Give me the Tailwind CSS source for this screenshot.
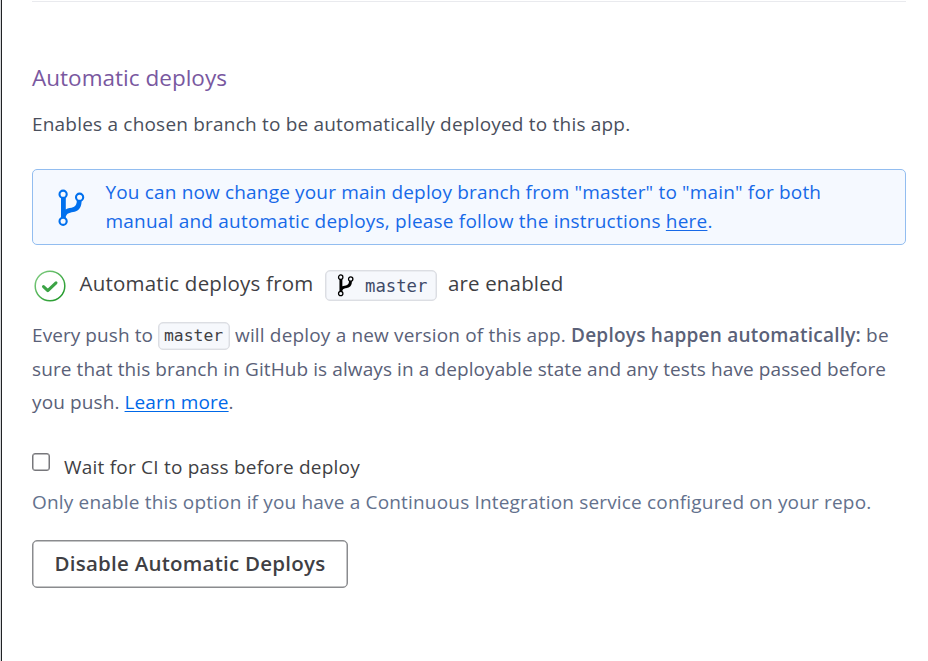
<!DOCTYPE html>
<html lang="en">
<head>
<meta charset="utf-8">
<title>Automatic deploys</title>
<script src="https://cdn.jsdelivr.net/npm/@tailwindcss/browser@4"></script>
</head>
<body class="bg-white font-['Open_Sans',sans-serif] text-[19px]">
<svg class="hidden">
  <symbol id="branch" viewBox="0 0 28 38">
    <path d="M4 9H8.8V20.4C11 18.8 14 19.2 16.6 18C19 16.8 19.8 14.6 19.8 11.5H24.6C24.6 16.5 23.4 20.4 19 22.3C15.5 23.8 10.5 22.8 8.8 27.5V30H4Z" fill="currentColor"/>
    <g fill="var(--hole)" stroke="currentColor" stroke-width="2.1">
      <circle cx="6.1" cy="5.2" r="3.6"/><circle cx="22.6" cy="8.2" r="3.6"/><circle cx="6.1" cy="32.3" r="3.6"/>
    </g>
  </symbol>
</svg>
<div class="flex h-[661px] overflow-hidden">
  <div class="w-[2px] shrink-0 border-r border-[#202225] bg-[#d5d7da]"></div>
  <main class="ml-[30px] w-[874px] shrink-0 whitespace-nowrap pt-px">
    <div class="h-px bg-[#e9eaee]"></div>
    <h2 class="mt-[60px] h-8 text-[22.5px] leading-8 tracking-[0.02px] text-[#79589f]">Automatic deploys</h2>
    <p class="mt-[16px] h-7 leading-7 tracking-[0.2px] text-[#4a4f5c]">Enables a chosen branch to be automatically deployed to this app.</p>

    <div class="mt-[31px] flex h-[76px] rounded-[5px] border border-[#92bdf0] bg-[#f5f9ff] pt-[8px] text-[#1769e8]">
      <svg class="ml-[24px] mt-[11px] h-[38px] w-7 shrink-0 text-[#0070ee] [--hole:#f5f9ff]"><use href="#branch"/></svg>
      <div class="ml-[20.5px] leading-[29px]">
        <p class="tracking-[0.16px]">You can now change your main deploy branch from "master" to "main" for both</p>
        <p class="tracking-[0.21px]">manual and automatic deploys, please follow the instructions <a class="underline decoration-1 underline-offset-[2px]">here</a>.</p>
      </div>
    </div>

    <div class="mt-[23px] flex h-[34px] text-[20.5px] leading-[30px] text-[#3f3f44]">
      <svg class="ml-[2px] mt-[2px] size-8 shrink-0" viewBox="0 0 32 32" fill="none">
        <defs><linearGradient id="ring" x1="0" y1="0" x2="1" y2="1"><stop stop-color="#85cf86"/><stop offset="1" stop-color="#16931f"/></linearGradient></defs>
        <circle cx="16" cy="16" r="14.8" stroke="url(#ring)" stroke-width="1.5"/>
        <path d="M9.5 16.6L13.8 20.7L22 12.9" stroke="#3ba345" stroke-width="3" stroke-linecap="round" stroke-linejoin="round"/>
      </svg>
      <span class="ml-[13.5px] w-[245.5px] tracking-[0.22px]">Automatic deploys from</span>
      <span class="mt-[2px] flex h-[31px] w-[112px] items-center rounded-[5px] border border-[#dcdee3] bg-[#f6f8fc] pl-[11px] text-[#3f4a68] shadow-[inset_0_0_0_0.5px_#dfe1e6]">
        <svg class="h-[23px] w-[17px] text-black [--hole:#f6f8fc]"><use href="#branch"/></svg>
        <code class="ml-[11px] font-['DejaVu_Sans_Mono',monospace] text-[17.3px]">master</code>
      </span>
      <span class="ml-[11px] tracking-[0.15px]">are enabled</span>
    </div>

    <div class="mt-[17px] leading-[33.5px] text-[#5a6178]">
      <p class="flex h-[34px]"><span class="w-[126px] tracking-[0.07px]">Every push to</span><code class="mt-[3px] h-7 w-[72px] rounded-[5px] border border-[#dcdee3] bg-[#f6f8fc] pl-[5px] font-['DejaVu_Sans_Mono',monospace] text-[16.4px] leading-[26px] text-[#3f3f44] shadow-[inset_0_0_0_0.5px_#dfe1e6]">master</code><span class="ml-[5px] w-[336px] tracking-[0.165px]">will deploy a new version of this app.</span><b class="w-[295px] font-semibold tracking-[0.235px]">Deploys happen automatically:</b><span class="tracking-[0.3px]">be</span></p>
      <p class="h-[33px] tracking-[0.093px]">sure that this branch in GitHub is always in a deployable state and any tests have passed before</p>
      <p class="h-[34px] tracking-[0.11px]">you push. <a class="text-[#0068e8] underline decoration-1 underline-offset-[2px]">Learn more</a>.</p>
    </div>

    <label class="mt-[32px] flex h-9 leading-[30px] text-[#3f3f44]">
      <span class="mt-px size-[18px] rounded-[3px] border border-[#77777b] shadow-[inset_0_0_0_0.5px_#77777b]"></span>
      <span class="ml-[14px] tracking-[0.215px]">Wait for CI to pass before deploy</span>
    </label>
    <p class="-mt-[3px] h-[34px] leading-[34px] tracking-[0.175px] text-[#63718d]">Only enable this option if you have a Continuous Integration service configured on your repo.</p>
    <button class="mt-[21px] block h-12 w-[316px] rounded-[5px] border border-[#8a8b8e] pb-px text-[20.5px] font-semibold tracking-[0.24px] text-[#3f3f44] shadow-[inset_0_0_0_0.5px_#8a8b8e]">Disable Automatic Deploys</button>
  </main>
</div>
</body>
</html>
